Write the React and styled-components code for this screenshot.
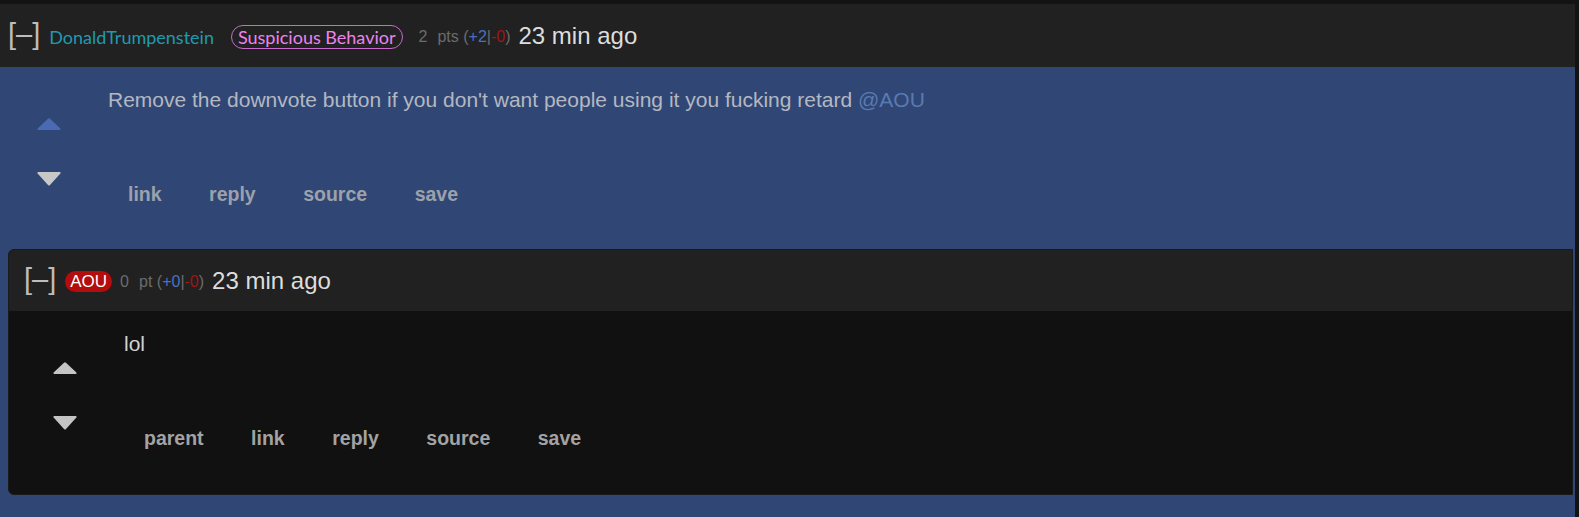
import styled, { createGlobalStyle } from "styled-components";

const GlobalStyle = createGlobalStyle`
	html, body {
		margin: 0;
		padding: 0;
		background: #131313;
		overflow: hidden;
	}
	#root {
		padding: 4px 4px 0 0;
		font-family: "Liberation Sans", Arial, sans-serif;
	}
`;

const Arrow = ({ dir, color }) =>
	dir === "up" ? (
		<svg width="24" height="12" viewBox="0 0 24 12">
			<path d="M11 0.8 Q12 -0.2 13 0.8 L23.4 10.6 Q24 12 22.6 12 H1.4 Q0 12 0.6 10.6 Z" fill={color} />
		</svg>
	) : (
		<svg width="24" height="14" viewBox="0 0 24 14">
			<path d="M1.2 0 H22.8 Q24 0 23.4 1.4 L13 13 Q12 14 11 13 L0.6 1.4 Q0 0 1.2 0 Z" fill={color} />
		</svg>
	);

const comment = {
	user: "DonaldTrumpenstein",
	flair: "Suspicious Behavior",
	points: 2,
	unit: "pts",
	up: 2,
	down: 0,
	time: "23 min ago",
	text: "Remove the downvote button if you don't want people using it you fucking retard ",
	mention: "@AOU",
	actions: ["link", "reply", "source", "save"],
	reply: {
		user: "AOU",
		points: 0,
		unit: "pt",
		up: 0,
		down: 0,
		time: "23 min ago",
		text: "lol",
		actions: ["parent", "link", "reply", "source", "save"],
	},
};

const Comment = ({ data, nested }) => {
	return (
		<Wrap $nested={nested}>
			<Header $nested={nested}>
				<Toggle>[–]</Toggle>
				{nested ? <OpBadge>{data.user}</OpBadge> : <User>{data.user}</User>}
				{data.flair && <Flair>{data.flair}</Flair>}
				<Score>
					{data.points}
					<Unit>{data.unit}</Unit> (<Plus>+{data.up}</Plus>|<Minus>-{data.down}</Minus>)
				</Score>
				<Time>{data.time}</Time>
			</Header>
			<Body $nested={nested}>
				<Votes>
					<Arrow dir="up" color={nested ? "#c4c4c4" : "#4a6ab4"} />
					<Arrow dir="down" color={nested ? "#c4c4c4" : "#c8c8c8"} />
				</Votes>
				<Content>
					<Text $nested={nested}>
						{data.text}
						{data.mention && <Mention>{data.mention}</Mention>}
					</Text>
					<Actions>
						{data.actions.map(a => (
							<Action key={a} $nested={nested}>
								{a}
							</Action>
						))}
					</Actions>
				</Content>
			</Body>
			{data.reply && (
				<Children>
					<Comment data={data.reply} nested />
				</Children>
			)}
		</Wrap>
	);
};

const App = () => (
	<>
		<GlobalStyle />
		<Comment data={comment} />
	</>
);

export default App;

const Wrap = styled.div`
	background: ${({ $nested }) => ($nested ? "#111111" : "#304775")};
	${({ $nested }) =>
		$nested &&
		`
		border: 1px solid #1a1a1a;
		border-radius: 6px 0 0 6px;
		overflow: hidden;
	`}
`;

const Header = styled.div`
	display: flex;
	align-items: center;
	gap: 8px;
	height: ${({ $nested }) => ($nested ? "61px" : "63px")};
	padding-left: ${({ $nested }) => ($nested ? "15px" : "8px")};
	background: #212121;
`;

const Toggle = styled.span`
	font-size: 29px;
	color: #bdbdbd;
	line-height: 1;
	margin-top: -2px;
	margin-right: 1px;
`;

const User = styled.span`
	font-family: Lato, "Open Sans", sans-serif;
	font-size: 18px;
	color: #1f9ab0;
	margin-top: 2px;
`;

const OpBadge = styled.span`
	background: #b30d0d;
	color: #ffffff;
	font-size: 17px;
	line-height: 21px;
	padding: 0 5px;
	border-radius: 11px;
	margin-top: 2px;
`;

const Flair = styled.span`
	font-family: Lato, "Open Sans", sans-serif;
	font-size: 18px;
	color: #ee82ee;
	border: 1px solid #c76ccc;
	border-radius: 12px;
	line-height: 22px;
	padding: 0 6px;
	margin: 2px 8px 0 9px;
`;

const Score = styled.span`
	font-size: 16px;
	color: #6c6c6c;
	margin-top: 3px;
`;

const Unit = styled.span`
	margin-left: 10px;
`;

const Plus = styled.span`
	color: #4a70c4;
`;

const Minus = styled.span`
	color: #a31414;
`;

const Time = styled.span`
	font-size: 24px;
	color: #dddddd;
`;

const Body = styled.div`
	display: flex;
	height: ${({ $nested }) => ($nested ? "183px" : "181px")};
	padding-left: ${({ $nested }) => ($nested ? "7px" : "0")};
`;

const Votes = styled.div`
	display: flex;
	flex-direction: column;
	align-items: center;
	gap: 42px;
	width: 98px;
	padding-top: 51px;
	box-sizing: border-box;

	svg {
		display: block;
	}
`;

const Content = styled.div`
	display: flex;
	flex-direction: column;
	padding: 22px 0 0 10px;
`;

const Text = styled.div`
	font-size: 21px;
	line-height: 22px;
	color: ${({ $nested }) => ($nested ? "#d2d2d2" : "#b4b8c1")};
`;

const Mention = styled.span`
	color: #5a7ab3;
`;

const Actions = styled.div`
	display: flex;
	gap: 47.5px;
	margin-top: 72px;
	padding-left: 20px;
`;

const Action = styled.span`
	font-size: 19.5px;
	line-height: 22px;
	font-weight: bold;
	color: ${({ $nested }) => ($nested ? "#a3a3a3" : "#9ca1ab")};
`;

const Children = styled.div`
	margin: 1px 2px 0 8px;
	padding-bottom: 40px;
`;
